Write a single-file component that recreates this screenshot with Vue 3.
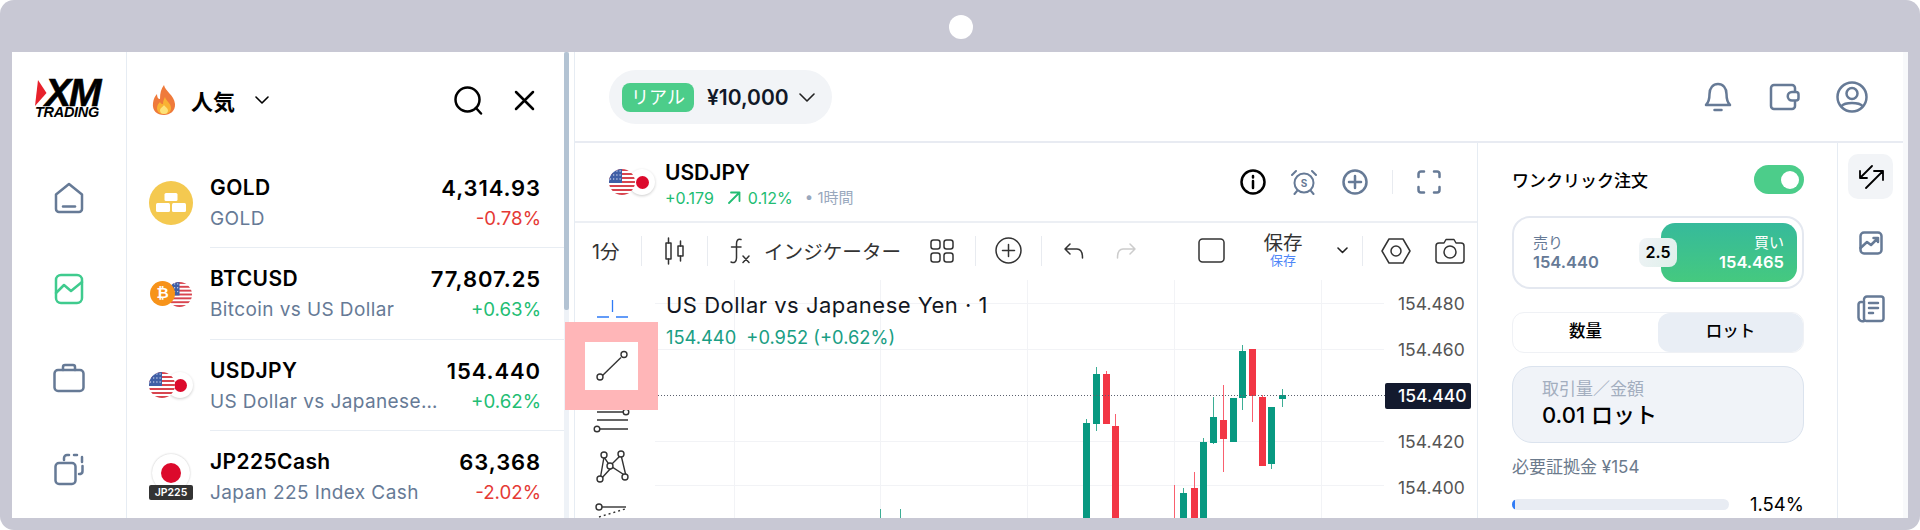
<script setup>
const symbols = [
  { name: "GOLD", sub: "GOLD", price: "4,314.93", change: "-0.78%", up: false, icon: "gold" },
  { name: "BTCUSD", sub: "Bitcoin vs US Dollar", price: "77,807.25", change: "+0.63%", up: true, icon: "btc" },
  { name: "USDJPY", sub: "US Dollar vs Japanese Yen", price: "154.440", change: "+0.62%", up: true, icon: "fx" },
  { name: "JP225Cash", sub: "Japan 225 Index Cash", price: "63,368", change: "-2.02%", up: false, icon: "jp" }
];

const prices = ["154.480", "154.460", "154.440", "154.420", "154.400"];
const gridX = [734, 880, 1027, 1174, 1321];
const gridY = [303, 349, 441, 485];

// x, body top, body bottom, wick top, wick bottom
const candles = [
  { x: 1086, top: 423, bot: 530, hi: 419, lo: 530, up: true },
  { x: 1096, top: 374, bot: 424, hi: 367, lo: 431, up: true },
  { x: 1106, top: 374, bot: 424, hi: 371, lo: 424, up: false },
  { x: 1115, top: 426, bot: 530, hi: 414, lo: 530, up: false },
  { x: 1174, top: 530, bot: 530, hi: 485, lo: 530, up: false },
  { x: 1183, top: 493, bot: 530, hi: 488, lo: 530, up: true },
  { x: 1194, top: 488, bot: 530, hi: 472, lo: 530, up: false },
  { x: 1203, top: 442, bot: 530, hi: 438, lo: 530, up: true },
  { x: 1213, top: 417, bot: 443, hi: 397, lo: 444, up: true },
  { x: 1223, top: 420, bot: 439, hi: 385, lo: 472, up: false },
  { x: 1233, top: 398, bot: 442, hi: 398, lo: 442, up: true },
  { x: 1242, top: 351, bot: 398, hi: 345, lo: 410, up: true },
  { x: 1252, top: 349, bot: 396, hi: 349, lo: 422, up: false },
  { x: 1262, top: 397, bot: 466, hi: 395, lo: 466, up: false },
  { x: 1271, top: 407, bot: 464, hi: 407, lo: 469, up: true },
  { x: 1282, top: 395, bot: 399, hi: 389, lo: 407, up: true },
  { x: 880, top: 530, bot: 530, hi: 509, lo: 530, up: true },
  { x: 900, top: 530, bot: 530, hi: 509, lo: 530, up: true }
];

const usStripes = [0, 2, 4, 6, 8, 10, 12];
</script>

<template>
  <div class="device">
    <span class="camera"></span>

    <!-- shared flag drawing -->
    <svg class="defs" width="0" height="0">
      <symbol id="us-flag" viewBox="0 0 26 26">
        <rect width="26" height="26" fill="#fff" />
        <rect v-for="s in usStripes" :key="s" x="0" :y="s * 2" width="26" height="2" fill="#d8454f" />
        <rect width="13" height="14" fill="#3f5fa6" />
        <g fill="#cfd8ee">
          <circle v-for="n in 12" :key="n" :cx="1.5 + ((n - 1) % 4) * 3.2" :cy="2 + Math.floor((n - 1) / 4) * 4" r=".7" />
        </g>
      </symbol>
    </svg>

    <div class="screen">
      <!-- left nav -->
      <nav class="sidenav">
        <div class="logo">
          <div class="logo-top">
            <svg width="12" height="26" viewBox="0 0 12 26"><path d="M3 0 L11.500 13 L0 26 Z" fill="#e8212b" /></svg>
            <span class="logo-xm">XM</span>
          </div>
          <span class="logo-sub">TRADING</span>
        </div>
        <div class="nav-icons">
          <svg class="ic" width="32" height="34" viewBox="0 0 32 34">
            <path d="M3 13.500 L16 3 L29 13.500 V28 a3 3 0 0 1 -3 3 H6 a3 3 0 0 1 -3 -3 Z" />
            <path d="M10 25.500 H22" />
          </svg>
          <svg class="ic green" width="30" height="32" viewBox="0 0 30 32">
            <rect x="2" y="2" width="26" height="28" rx="5" />
            <path d="M2 20 L10 12 L17 18 L28 9" />
          </svg>
          <svg class="ic" width="34" height="32" viewBox="0 0 34 32">
            <rect x="2.500" y="8" width="29" height="21" rx="3.500" />
            <path d="M11 8 V5 a2 2 0 0 1 2 -2 H21 a2 2 0 0 1 2 2 V8" />
          </svg>
          <svg class="ic" width="32" height="34" viewBox="0 0 32 34">
            <rect x="2.500" y="11" width="20" height="21" rx="3.500" />
            <path d="M11 8 V6 a3 3 0 0 1 3 -3 H16 M21 3 H24 M29 5 a3 3 0 0 1 0 .5 V10 M29.500 14 V19 a3 3 0 0 1 -2 3 H26" />
          </svg>
        </div>
      </nav>

      <!-- watchlist -->
      <section class="watch">
        <div class="watch-main">
          <header class="watch-head">
            <svg width="24" height="30" viewBox="0 0 24 30">
              <path d="M12 0 C13 6 22 10 23 19 C23.500 26 18 30 12 30 C5 30 0 26 1 18 C1.500 14 3 11 5 9 C5 12 6 14 8 14 C8 8 9 4 12 0 Z" fill="#ef7a3b" />
              <path d="M13 12 C14 16 19 18 19 23 C19 27 16 29 12 29 C8 29 5 27 5 23 C5 20 7 18 8 17 C9 19 10 19 11 19 C11 16 12 14 13 12 Z" fill="#f9b233" />
              <path d="M12 20 C13 22 16 23 16 25.500 C16 28 14 29 12 29 C10 29 8 28 8 25.500 C8 23 11 22 12 20 Z" fill="#fde27a" />
            </svg>
            <span class="watch-title">人気</span>
            <svg class="chev black" width="14" height="8" viewBox="0 0 14 8"><path d="M1 1 L7 7 L13 1" /></svg>
            <svg class="ic black search" width="29" height="29" viewBox="0 0 29 29">
              <circle cx="13.500" cy="13.500" r="12" />
              <path d="M22 22 L27 27.500" />
            </svg>
            <svg class="ic black close" width="21" height="21" viewBox="0 0 21 21">
              <path d="M2 2 L19 19 M19 2 L2 19" />
            </svg>
          </header>

          <ul class="rows">
            <li v-for="item in symbols" :key="item.name" class="row">
              <div class="row-icon">
                <svg v-if="item.icon === 'gold'" width="44" height="44" viewBox="0 0 44 44">
                  <circle cx="22" cy="22" r="22" fill="#f4c950" />
                  <rect x="15.500" y="12" width="13" height="8" rx="1.500" fill="#fff" />
                  <rect x="7" y="22" width="14" height="9" rx="1.500" fill="#fff" />
                  <rect x="23" y="22" width="14" height="9" rx="1.500" fill="#fff" />
                </svg>
                <div v-else-if="item.icon === 'btc'" class="pair">
                  <svg class="round b1" width="25" height="25"><use href="#us-flag" /></svg>
                  <span class="btc">₿</span>
                </div>
                <div v-else-if="item.icon === 'fx'" class="pair">
                  <span class="jp-disc"><i></i></span>
                  <svg class="round b2" width="26" height="26"><use href="#us-flag" /></svg>
                </div>
                <div v-else class="index">
                  <span class="index-disc"><i></i></span>
                  <span class="index-tag">JP225</span>
                </div>
              </div>
              <div class="row-body">
                <div class="row-line">
                  <span class="row-name">{{ item.name }}</span>
                  <span class="row-price">{{ item.price }}</span>
                </div>
                <div class="row-line">
                  <span class="row-sub">{{ item.sub }}</span>
                  <span class="row-change" :class="item.up ? 'up' : 'down'">{{ item.change }}</span>
                </div>
              </div>
            </li>
          </ul>
        </div>
        <div class="track"><div class="thumb"></div></div>
      </section>

      <!-- main -->
      <main class="main">
        <header class="topbar">
          <div class="account">
            <span class="badge">リアル</span>
            <span class="balance">¥10,000</span>
            <svg class="chev dark" width="16" height="9" viewBox="0 0 16 9"><path d="M1 1 L8 8 L15 1" /></svg>
          </div>
          <div class="top-icons">
            <svg class="ic" width="28" height="30" viewBox="0 0 28 30">
              <path d="M2 23 C5 20 5.500 17 5.500 12 C5.500 6 9 2 14 2 C19 2 22.500 6 22.500 12 C22.500 17 23 20 26 23 Z" />
              <path d="M10.500 28 H17.500" />
            </svg>
            <svg class="ic" width="32" height="28" viewBox="0 0 32 28">
              <path d="M27 8 V5 a3 3 0 0 0 -3 -3 H6 a3 3 0 0 0 -3 3 V23 a3 3 0 0 0 3 3 H24 a3 3 0 0 0 3 -3 V19" />
              <path d="M24 9 H28 a2.500 2.500 0 0 1 2.500 2.500 V15 a2.500 2.500 0 0 1 -2.500 2.500 H24 a4 4 0 0 1 0 -8.500 Z" />
            </svg>
            <svg class="ic" width="32" height="32" viewBox="0 0 32 32">
              <circle cx="16" cy="16" r="14.500" />
              <circle cx="16" cy="12.500" r="5.500" />
              <path d="M5.500 25 C9 21 23 21 26.500 25" />
            </svg>
          </div>
        </header>

        <div class="workspace">
          <section class="chart">
            <div class="chart-head">
              <div class="flags">
                <svg class="round" width="26" height="26"><use href="#us-flag" /></svg>
                <span class="jp-disc"><i></i></span>
              </div>
              <div class="chart-title">
                <strong>USDJPY</strong>
                <div class="chart-meta">
                  <span class="up">+0.179</span>
                  <svg class="ic up-arrow" width="13" height="13" viewBox="0 0 13 13"><path d="M1 12 L11.500 1.500 M3 1.500 H11.500 V10" /></svg>
                  <span class="up">0.12%</span>
                  <span class="interval">• 1時間</span>
                </div>
              </div>
              <div class="head-icons">
                <svg class="ic black" width="26" height="26" viewBox="0 0 26 26">
                  <circle cx="13" cy="13" r="11.500" />
                  <path d="M13 12 V19 M13 7 V8.500" />
                </svg>
                <svg class="ic thin" width="28" height="26" viewBox="0 0 28 26">
                  <circle cx="14" cy="14" r="9.500" />
                  <path d="M2 6 L6 2 M22 2 L26 6 M7 22 L4.500 25 M21 22 L23.500 25" />
                  <text x="14" y="18" class="alarm-s">S</text>
                </svg>
                <svg class="ic" width="26" height="26" viewBox="0 0 26 26">
                  <circle cx="13" cy="13" r="11.500" />
                  <path d="M7 13 H19 M13 7 V19" />
                </svg>
                <span class="vr tall"></span>
                <svg class="ic" width="24" height="24" viewBox="0 0 24 24">
                  <path d="M1.500 7 V4 a2.500 2.500 0 0 1 2.500 -2.500 H7 M17 1.500 H20 a2.500 2.500 0 0 1 2.500 2.500 V7 M22.500 17 V20 a2.500 2.500 0 0 1 -2.500 2.500 H17 M7 22.500 H4 a2.500 2.500 0 0 1 -2.500 -2.500 V17" />
                </svg>
              </div>
            </div>

            <div class="toolbar">
              <span class="tb-interval">1分</span>
              <span class="vr"></span>
              <span class="tb-candle">
                <svg class="ic dark thin-line" width="22" height="28" viewBox="0 0 22 28">
                  <rect x="2" y="6" width="5" height="16" />
                  <path d="M4.500 1 V6 M4.500 22 V27" />
                  <rect x="14" y="9" width="5" height="10" />
                  <path d="M16.500 4 V9 M16.500 19 V24" />
                </svg>
              </span>
              <span class="vr"></span>
              <span class="tb-indicator">
                <svg class="ic dark thin-line" width="20" height="26" viewBox="0 0 20 26">
                  <path d="M11 1.500 C7.500 .5 6.500 3 6.500 6 V20 C6.500 24 4 25.500 1 24 M1.500 9 H11" />
                  <path d="M13 18 L19 24.500 M19 18 L13 24.500" />
                </svg>
                <span class="tb-label">インジケーター</span>
                <svg class="ic dark thin-line grid-ic" width="24" height="24" viewBox="0 0 24 24">
                  <rect x="1" y="1" width="9" height="9" rx="2.500" />
                  <rect x="14" y="1" width="9" height="9" rx="2.500" />
                  <rect x="1" y="14" width="9" height="9" rx="2.500" />
                  <rect x="14" y="14" width="9" height="9" rx="2.500" />
                </svg>
              </span>
              <span class="vr"></span>
              <span class="tb-plus">
                <svg class="ic dark thin-line" width="27" height="27" viewBox="0 0 27 27">
                  <circle cx="13.500" cy="13.500" r="12.500" />
                  <path d="M7.500 13.500 H19.500 M13.500 7.500 V19.500" />
                </svg>
              </span>
              <span class="vr"></span>
              <svg class="ic dark thin-line undo" width="20" height="16" viewBox="0 0 20 16">
                <path d="M6 1 L1 6 L6 11 M1 6 H13 C16 6 18.500 8 18.500 15" />
              </svg>
              <svg class="ic faint thin-line redo" width="20" height="16" viewBox="0 0 20 16">
                <path d="M14 1 L19 6 L14 11 M19 6 H7 C4 6 1.500 8 1.500 15" />
              </svg>
              <svg class="ic dark thin-line layout-ic" width="27" height="25" viewBox="0 0 27 25">
                <rect x="1" y="1" width="25" height="23" rx="3.500" />
              </svg>
              <span class="save">
                <span class="save-main">保存</span>
                <span class="save-sub">保存</span>
              </span>
              <svg class="chev dark save-chev" width="11" height="7" viewBox="0 0 11 7"><path d="M1 1 L5.500 5.500 L10 1" /></svg>
              <span class="vr"></span>
              <svg class="ic dark thin-line hex" width="30" height="26" viewBox="0 0 30 26">
                <path d="M8 1 H22 L29 13 L22 25 H8 L1 13 Z" />
                <circle cx="15" cy="13" r="5" />
              </svg>
              <svg class="ic dark thin-line camera-ic" width="30" height="26" viewBox="0 0 30 26">
                <path d="M4 5 H9 L11 1.500 H19 L21 5 H26 a3 3 0 0 1 3 3 V22 a3 3 0 0 1 -3 3 H4 a3 3 0 0 1 -3 -3 V8 a3 3 0 0 1 3 -3 Z" />
                <circle cx="15" cy="14" r="6" />
              </svg>
            </div>

            <div class="chart-body">
              <aside class="draw-tools">
                <div class="tool">
                  <svg width="53" height="48" viewBox="0 0 53 48">
                    <path d="M12 24 H24 M31 24 H43 M27.500 7 V19" stroke="#2f7bf6" stroke-width="1.300" fill="none" />
                  </svg>
                </div>
                <div class="tool picked">
                  <svg class="draw" width="53" height="48" viewBox="0 0 53 48">
                    <path d="M17.500 33.500 L36 15.500" />
                    <circle cx="15" cy="35" r="3" />
                    <circle cx="39" cy="12.500" r="3" />
                  </svg>
                </div>
                <div class="tool">
                  <svg class="draw" width="53" height="48" viewBox="0 0 53 48">
                    <path d="M12 21 H38 M12 29 H43 M15 38 H43" />
                    <circle cx="41" cy="21" r="2.800" />
                    <circle cx="12" cy="38" r="2.800" />
                  </svg>
                </div>
                <div class="tool">
                  <svg class="draw" width="53" height="48" viewBox="0 0 53 48">
                    <path d="M15 40 L19 17 L25 26 L36 15 L41 36 L27 27 L15 40" />
                    <circle cx="19" cy="15" r="3" />
                    <circle cx="36" cy="14" r="3" />
                    <circle cx="25" cy="26" r="3" />
                    <circle cx="15" cy="39" r="3" />
                    <circle cx="40" cy="37" r="3" />
                  </svg>
                </div>
                <div class="tool">
                  <svg class="draw" width="53" height="48" viewBox="0 0 53 48">
                    <path d="M17 18 H41" />
                    <circle cx="14" cy="18" r="3" />
                    <path d="M14 28 L40 20" stroke-dasharray="2 3" />
                  </svg>
                </div>
              </aside>

              <div class="plot">
                <svg class="plot-svg" width="730" height="238" viewBox="655 280 730 238">
                  <line v-for="x in gridX" :key="x" :x1="x + 0.5" :x2="x + 0.5" y1="280" y2="518" stroke="#f2f3f6" />
                  <line v-for="y in gridY" :key="y" x1="655" x2="1384" :y1="y + 0.5" :y2="y + 0.5" stroke="#f2f3f6" />
                  <g v-for="c in candles" :key="c.x">
                    <line :x1="c.x + 0.5" :x2="c.x + 0.5" :y1="c.hi" :y2="c.lo" :stroke="c.up ? '#3dae95' : '#f9606f'" />
                    <rect :x="c.x - 3" :y="c.top" width="7" :height="c.bot - c.top" :fill="c.up ? '#089981' : '#f23645'" />
                  </g>
                  <line x1="655" x2="1385" y1="395.500" y2="395.500" stroke="#5b616e" stroke-dasharray="1 2" />
                </svg>
                <div class="legend">
                  <div class="legend-title">US Dollar vs Japanese Yen · 1</div>
                  <div class="legend-values">154.440 <span>+0.952 (+0.62%)</span></div>
                </div>
              </div>

              <div class="price-axis">
                <span v-for="p in prices" :key="p" class="price" :class="{ now: p === '154.440' }">{{ p }}</span>
              </div>
            </div>
          </section>

          <aside class="order">
            <div class="one-click">
              <span>ワンクリック注文</span>
              <span class="toggle"><i></i></span>
            </div>
            <div class="trade-box">
              <div class="sell">
                <span class="side">売り</span>
                <span class="rate">154.440</span>
              </div>
              <div class="buy">
                <span class="side">買い</span>
                <span class="rate">154.465</span>
              </div>
              <span class="spread">2.5</span>
            </div>
            <div class="tabs">
              <span class="tab">数量</span>
              <span class="tab active">ロット</span>
            </div>
            <div class="volume">
              <span class="volume-label">取引量／金額</span>
              <span class="volume-value">0.01 ロット</span>
            </div>
            <div class="margin-text">必要証拠金 ¥154</div>
            <div class="margin-row">
              <div class="bar"><div class="bar-fill" :style="{ width: '1.54%' }"></div></div>
              <span class="margin-pct">1.54%</span>
            </div>
          </aside>

          <aside class="rail">
            <span class="rail-btn active">
              <svg class="ic black arrows" width="26" height="26" viewBox="0 0 26 26">
                <path d="M14 2 L2 14 M2 7 V14 H9 M25 7 L8 24 M16 7 H25 V16" />
              </svg>
            </span>
            <span class="rail-btn">
              <svg class="ic" width="24" height="24" viewBox="0 0 24 24">
                <rect x="1.500" y="1.500" width="21" height="21" rx="3.500" />
                <path d="M1.500 17 L8 11 L12 14 L19 7 M14.500 7 H19 V11" />
              </svg>
            </span>
            <span class="rail-btn">
              <svg class="ic" width="28" height="28" viewBox="0 0 28 28">
                <path d="M7 6 V24 a2.500 2.500 0 0 0 2.500 2 H24 a2.500 2.500 0 0 0 2.500 -2.500 V4 a2.500 2.500 0 0 0 -2.500 -2.500 H10 A3 3 0 0 0 7 4.500 M7 7 H4 A2.500 2.500 0 0 0 1.500 9.500 V22 A4 4 0 0 0 7 26" />
                <path d="M12 8 H21 M12 13 H21 M12 18 H16" />
              </svg>
            </span>
          </aside>
        </div>
      </main>
      <div class="gutter"></div>
    </div>
  </div>
</template>

<style scoped>
.device {
  position: relative;
  width: 1920px;
  height: 530px;
  box-sizing: border-box;
  padding: 52px 12px 12px 12px;
  background: #c8c8d4;
  border-radius: 14px;
  font-family: Inter, "Noto Sans CJK JP", sans-serif;
  color: #000;
}

.defs {
  position: absolute;
}

.camera {
  position: absolute;
  left: 949px;
  top: 15px;
  width: 24px;
  height: 24px;
  border-radius: 50%;
  background: #fff;
}

.screen {
  display: flex;
  height: 466px;
  background: #fff;
  overflow: hidden;
}

svg {
  display: block;
  flex: none;
}

.ic {
  fill: none;
  stroke: #667a96;
  stroke-width: 2.500;
  stroke-linecap: round;
  stroke-linejoin: round;
}

.ic.green {
  stroke: #3fcb8e;
}

.ic.black {
  stroke: #000;
}

.ic.dark {
  stroke: #333;
}

.ic.faint {
  stroke: #ccc;
}

.ic.thin {
  stroke-width: 2;
}

.ic.thin-line {
  stroke-width: 1.500;
}

.ic.arrows {
  stroke-width: 1.800;
}

.chev {
  fill: none;
  stroke-width: 1.600;
  stroke-linecap: round;
  stroke-linejoin: round;
}

.chev.black {
  stroke: #000;
}

.chev.dark {
  stroke: #222;
}

/* side nav */
.sidenav {
  width: 114px;
  flex: none;
  border-right: 1px solid #e6ecf3;
  display: flex;
  flex-direction: column;
  align-items: center;
}

.logo {
  margin-top: 27px;
  display: flex;
  flex-direction: column;
  font-family: "Liberation Sans", sans-serif;
  font-weight: 700;
  font-style: italic;
  width: 68px;
}

.logo-top {
  display: flex;
  align-items: center;
  height: 27px;
}

.logo-xm {
  font-size: 39px;
  line-height: 27px;
  letter-spacing: -2px;
  margin-left: -2px;
  -webkit-text-stroke: .6px #000;
}

.logo-sub {
  font-size: 14.500px;
  line-height: 13px;
  letter-spacing: -0.300px;
}

.nav-icons {
  margin-top: 62px;
  display: flex;
  flex-direction: column;
  align-items: center;
  gap: 57.500px;
}

/* watchlist */
.watch {
  width: 447px;
  flex: none;
  display: flex;
  position: relative;
}

.watch-main {
  width: 437px;
  flex: none;
}

.watch-head {
  height: 96px;
  box-sizing: border-box;
  padding: 0 29px 0 25px;
  display: flex;
  align-items: center;
}

.watch-title {
  margin-left: 15px;
  font-size: 22px;
  font-weight: 700;
}

.watch-head .chev {
  margin-left: 20px;
}

.search {
  margin-left: auto;
}

.close {
  margin-left: 31px;
}

.rows {
  list-style: none;
  margin: 0;
  padding: 9px 0 0;
}

.row {
  height: 91.330px;
  display: flex;
  align-items: stretch;
}

.row-icon {
  width: 83px;
  flex: none;
  padding-left: 22px;
  box-sizing: border-box;
  display: flex;
  align-items: center;
}

.row-body {
  flex: 1;
  min-width: 0;
  padding: 19px 23px 0 0;
  box-sizing: border-box;
  border-bottom: 1px solid #e8edf3;
}

.row-line {
  display: flex;
  justify-content: space-between;
  align-items: center;
  gap: 28px;
}

.row-line + .row-line {
  margin-top: 7px;
}

.row-name {
  font-size: 21px;
  line-height: 24px;
  font-weight: 600;
  letter-spacing: .4px;
}

.row-price {
  font-size: 22px;
  line-height: 24px;
  font-weight: 600;
  letter-spacing: .9px;
}

.row-sub {
  font-size: 19px;
  line-height: 24px;
  letter-spacing: .4px;
  color: #667a96;
  white-space: nowrap;
  overflow: hidden;
  text-overflow: ellipsis;
}

.row-change {
  font-size: 18.700px;
  line-height: 24px;
}

.up {
  color: #22bd73;
}

.down {
  color: #e53935;
}

.pair {
  position: relative;
  width: 44px;
  height: 28px;
}

.round {
  border-radius: 50%;
}

.pair .round {
  position: absolute;
  left: 0;
  top: 1px;
}

.pair .b1 {
  left: 18px;
  top: 2px;
}

.btc {
  position: absolute;
  left: 1px;
  top: 1px;
  width: 25px;
  height: 25px;
  border-radius: 50%;
  background: #f7931a;
  color: #fff;
  font-family: "DejaVu Sans", sans-serif;
  font-size: 15px;
  font-weight: 700;
  line-height: 25px;
  text-align: center;
}

.jp-disc {
  display: flex;
  align-items: center;
  justify-content: center;
  width: 26px;
  height: 26px;
  border-radius: 50%;
  background: #fff;
  box-shadow: 0 1px 3px rgba(0, 0, 0, .2);
}

.jp-disc i {
  display: block;
  width: 13px;
  height: 13px;
  border-radius: 50%;
  background: #dc0a2c;
}

.pair .jp-disc {
  position: absolute;
  left: 18px;
  top: 1px;
}

.index {
  position: relative;
  width: 44px;
  height: 46px;
}

.index-disc {
  position: absolute;
  left: 3px;
  top: 0;
  width: 38px;
  height: 38px;
  border-radius: 50%;
  background: #fff;
  box-shadow: 0 0 2px rgba(0, 0, 0, .25);
  display: flex;
  align-items: center;
  justify-content: center;
}

.index-disc i {
  display: block;
  width: 20px;
  height: 20px;
  border-radius: 50%;
  background: #dc0a2c;
}

.index-tag {
  position: absolute;
  left: 0;
  bottom: 0;
  width: 44px;
  height: 15px;
  border-radius: 2px;
  background: #333;
  color: #fff;
  font-size: 10.500px;
  font-weight: 600;
  line-height: 15px;
  text-align: center;
}

.track {
  width: 5px;
  height: 466px;
  flex: none;
  background: #eef2f7;
}

.thumb {
  height: 258px;
  background: #b3c3d3;
  border-radius: 2px;
}

/* main */
.main {
  flex: 1;
  min-width: 0;
  display: flex;
  flex-direction: column;
  border-left: 1px solid #e6ecf3;
}

.gutter {
  width: 5px;
  flex: none;
  background: #f8f9fb;
}

.topbar {
  height: 91px;
  flex: none;
  box-sizing: border-box;
  border-bottom: 2px solid #e8ebf2;
  padding: 1px 35px 0 34px;
  display: flex;
  align-items: center;
  justify-content: space-between;
}

.account {
  height: 54px;
  width: 223px;
  box-sizing: border-box;
  padding-left: 13px;
  border-radius: 27px;
  background: #f2f4f7;
  display: flex;
  align-items: center;
}

.badge {
  width: 72px;
  height: 29px;
  border-radius: 8px;
  background: #4ccd8a;
  color: #fff;
  font-size: 18px;
  line-height: 29px;
  text-align: center;
}

.balance {
  margin-left: 13px;
  font-size: 21px;
  font-weight: 600;
  color: #111827;
}

.account .chev {
  margin-left: 10px;
}

.top-icons {
  display: flex;
  align-items: center;
  gap: 36px;
}

.workspace {
  flex: 1;
  min-height: 0;
  display: flex;
}

.chart {
  width: 902px;
  flex: none;
  border-right: 1px solid #e6ecf3;
  display: flex;
  flex-direction: column;
}

.chart-head {
  height: 80px;
  flex: none;
  box-sizing: border-box;
  border-bottom: 2px solid #eceff4;
  padding: 0 36px 0 34px;
  display: flex;
  align-items: center;
}

.flags {
  position: relative;
  width: 46px;
  height: 26px;
  flex: none;
}

.flags .jp-disc {
  position: absolute;
  left: 20px;
  top: 0;
}

.flags .round {
  position: relative;
  z-index: 1;
}

.chart-title {
  margin-left: 10px;
  padding-top: 4px;
}

.chart-title strong {
  display: block;
  font-size: 21px;
  font-weight: 600;
  line-height: 24px;
}

.chart-meta {
  display: flex;
  align-items: center;
  margin-top: 3px;
  font-size: 16px;
  line-height: 20px;
}

.up-arrow {
  stroke: #22bd73;
  stroke-width: 1.800;
  margin: 0 7px 0 14px;
}

.interval {
  margin-left: 12px;
  color: #99a8bd;
  font-size: 15px;
}

.head-icons {
  margin-left: auto;
  display: flex;
  align-items: center;
  gap: 24px;
}

.vr {
  width: 1px;
  height: 30px;
  background: #e8ebf0;
  flex: none;
}

.vr.tall {
  height: 24px;
}

.toolbar {
  height: 57px;
  flex: none;
  box-sizing: border-box;
  padding-bottom: 2px;
  display: flex;
  align-items: center;
  font-size: 19.600px;
  color: #333;
}

.tb-interval {
  width: 66px;
  box-sizing: border-box;
  padding-left: 17px;
}

.tb-candle {
  width: 65px;
  display: flex;
  justify-content: center;
}

.tb-indicator {
  width: 267px;
  box-sizing: border-box;
  padding-left: 22px;
  display: flex;
  align-items: center;
}

.tb-label {
  margin-left: 14px;
  white-space: nowrap;
}

.grid-ic {
  margin-left: auto;
  margin-right: 21px;
}

.tb-plus {
  width: 65px;
  display: flex;
  justify-content: center;
}

.undo {
  margin-left: 22px;
}

.redo {
  margin-left: 32px;
}

.layout-ic {
  margin-left: 62px;
}

.save {
  width: 80px;
  margin-left: 18px;
  display: flex;
  flex-direction: column;
  align-items: center;
}

.save-main {
  font-size: 19.500px;
  line-height: 20px;
}

.save-sub {
  font-size: 13px;
  line-height: 15px;
  color: #4f86f7;
}

.save-chev {
  margin-left: 14px;
  margin-right: 14px;
}

.hex {
  margin-left: 18px;
}

.camera-ic {
  margin-left: 24px;
}

.chart-body {
  flex: 1;
  min-height: 0;
  display: flex;
  position: relative;
}

.draw-tools {
  width: 80px;
  flex: none;
  box-sizing: border-box;
  padding: 13px 0 0 10px;
  display: flex;
  flex-direction: column;
  gap: 1px;
}

.tool {
  width: 53px;
  height: 48px;
  flex: none;
  position: relative;
}

.tool.picked {
  z-index: 5;
  background: #fff;
  box-shadow: 0 0 0 20px #ffb6b8;
}

.draw {
  fill: none;
  stroke: #333;
  stroke-width: 1.400;
}

.draw circle {
  fill: #fff;
}

.plot {
  width: 730px;
  flex: none;
  position: relative;
}

.legend {
  position: absolute;
  left: 11px;
  top: 10px;
}

.legend-title {
  font-size: 22px;
  line-height: 30px;
  letter-spacing: .5px;
  color: #131722;
}

.legend-values {
  margin-top: 5px;
  font-size: 18.300px;
  line-height: 24px;
  color: #1a9e84;
}

.legend-values span {
  margin-left: 5px;
}

.price-axis {
  flex: 1;
  display: flex;
  flex-direction: column;
  margin-top: 11px;
}

.price {
  width: 86px;
  height: 46px;
  flex: none;
  box-sizing: border-box;
  padding: 0 4px 0 13px;
  font-size: 17.500px;
  line-height: 25px;
  color: #555;
}

.price.now {
  height: 26px;
  margin: 0 0 20px;
  background: #131a2e;
  color: #fff;
  font-weight: 500;
  border-radius: 2px;
  line-height: 26px;
}

/* order ticket */
.order {
  width: 360px;
  flex: none;
  box-sizing: border-box;
  padding: 22px 33px 0 34px;
  border-right: 1px solid #e6ecf3;
  display: flex;
  flex-direction: column;
}

.one-click {
  display: flex;
  align-items: center;
  justify-content: space-between;
  height: 29px;
  font-size: 17px;
  font-weight: 500;
}

.toggle {
  width: 50px;
  height: 29px;
  border-radius: 15px;
  background: #4ccd8a;
  display: flex;
  align-items: center;
  justify-content: flex-end;
  padding-right: 5px;
  box-sizing: border-box;
}

.toggle i {
  display: block;
  width: 18px;
  height: 18px;
  border-radius: 50%;
  background: #fff;
}

.trade-box {
  margin-top: 22px;
  height: 73px;
  box-sizing: border-box;
  border: 2px solid #e4e8f0;
  border-radius: 18px;
  padding: 5px 5px;
  display: flex;
  position: relative;
}

.sell,
.buy {
  display: flex;
  flex-direction: column;
  justify-content: center;
}

.sell {
  flex: 1;
  padding-left: 14px;
  color: #667a96;
}

.buy {
  width: 136px;
  flex: none;
  box-sizing: border-box;
  padding-right: 13px;
  align-items: flex-end;
  border-radius: 14px;
  color: #fff;
  background: linear-gradient(180deg, #36ba9b, #45c97f);
}

.side {
  font-size: 15px;
  line-height: 20px;
}

.rate {
  font-size: 16.500px;
  line-height: 19px;
  font-weight: 600;
}

.spread {
  position: absolute;
  left: 125px;
  top: 20px;
  width: 38px;
  height: 29px;
  border-radius: 8px;
  background: linear-gradient(120deg, #f0f3f7, #dff0ea);
  font-size: 16px;
  font-weight: 600;
  line-height: 29px;
  text-align: center;
}

.tabs {
  margin-top: 23px;
  height: 41px;
  box-sizing: border-box;
  border: 1px solid #eff1f5;
  border-radius: 12px;
  display: flex;
}

.tab {
  flex: 1;
  font-size: 16.500px;
  font-weight: 500;
  line-height: 37px;
  text-align: center;
  border-radius: 12px;
}

.tab.active {
  background: #e9eef5;
}

.volume {
  margin-top: 13px;
  height: 77px;
  box-sizing: border-box;
  border: 1px solid #dbe3ee;
  border-radius: 20px;
  background: #f0f3f8;
  padding: 9px 0 0 29px;
  display: flex;
  flex-direction: column;
}

.volume-label {
  font-size: 17px;
  line-height: 26px;
  color: #a3aebf;
}

.volume-value {
  font-size: 22px;
  font-weight: 500;
  line-height: 26px;
}

.margin-text {
  margin-top: 13px;
  font-size: 17px;
  line-height: 22px;
  color: #6b7a8c;
}

.margin-row {
  margin-top: 16px;
  display: flex;
  align-items: center;
  justify-content: space-between;
}

.bar {
  width: 217px;
  height: 11px;
  border-radius: 6px;
  background: #e8ecf3;
  overflow: hidden;
}

.bar-fill {
  height: 100%;
  background: #2f7bf6;
  border-radius: 6px;
}

.margin-pct {
  font-size: 18.500px;
  line-height: 20px;
}

/* right rail */
.rail {
  flex: 1;
  display: flex;
  flex-direction: column;
  align-items: center;
  padding-top: 11px;
  gap: 21px;
}

.rail-btn {
  width: 45px;
  height: 45px;
  border-radius: 10px;
  display: flex;
  align-items: center;
  justify-content: center;
}

.rail-btn.active {
  background: #f2f4f7;
}

.alarm-s {
  font-family: Inter, sans-serif;
  font-size: 10px;
  font-weight: 700;
  text-anchor: middle;
  stroke: none;
  fill: #667a96;
}
</style>

<style>
html,
body {
  margin: 0;
  background: #fff;
}
</style>
